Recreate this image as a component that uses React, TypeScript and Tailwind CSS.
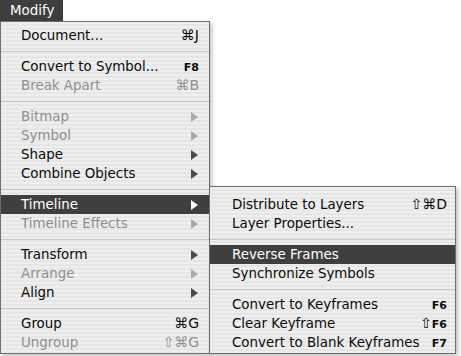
import React from "react";

type Item =
  | { sep: true }
  | {
      sep?: false;
      label: string;
      shortcut?: React.ReactNode;
      arrow?: boolean;
      disabled?: boolean;
      active?: boolean;
    };

const stripes =
  "bg-[repeating-linear-gradient(to_bottom,#eeeeee_0px,#eeeeee_2px,#e6e6e6_2px,#e6e6e6_4px)]";

function Arrow({ color }: { color: string }) {
  return (
    <svg width="7" height="10" viewBox="0 0 7 10" className="shrink-0">
      <polygon points="0,0 7,5 0,10" fill={color} />
    </svg>
  );
}

const Fkey = ({ children }: { children: React.ReactNode }) => (
  <span className="text-[11px] font-bold">{children}</span>
);

const Cmd = ({ children }: { children: React.ReactNode }) => (
  <span className="text-[14px]">{children}</span>
);

const mainItems: Item[] = [
  { label: "Document...", shortcut: <Cmd>⌘J</Cmd> },
  { sep: true },
  { label: "Convert to Symbol...", shortcut: <Fkey>F8</Fkey> },
  { label: "Break Apart", shortcut: <Cmd>⌘B</Cmd>, disabled: true },
  { sep: true },
  { label: "Bitmap", arrow: true, disabled: true },
  { label: "Symbol", arrow: true, disabled: true },
  { label: "Shape", arrow: true },
  { label: "Combine Objects", arrow: true },
  { sep: true },
  { label: "Timeline", arrow: true, active: true },
  { label: "Timeline Effects", arrow: true, disabled: true },
  { sep: true },
  { label: "Transform", arrow: true },
  { label: "Arrange", arrow: true, disabled: true },
  { label: "Align", arrow: true },
  { sep: true },
  { label: "Group", shortcut: <Cmd>⌘G</Cmd> },
  { label: "Ungroup", shortcut: <Cmd>⇧⌘G</Cmd>, disabled: true },
];

const subItems: Item[] = [
  { label: "Distribute to Layers", shortcut: <Cmd>⇧⌘D</Cmd> },
  { label: "Layer Properties..." },
  { sep: true },
  { label: "Reverse Frames", active: true },
  { label: "Synchronize Symbols" },
  { sep: true },
  { label: "Convert to Keyframes", shortcut: <Fkey>F6</Fkey> },
  { label: "Clear Keyframe", shortcut: <span><Cmd>⇧</Cmd><Fkey>F6</Fkey></span> },
  { label: "Convert to Blank Keyframes", shortcut: <Fkey>F7</Fkey> },
];

function Separator() {
  return (
    <div className="h-[12px] flex items-center">
      <div className="w-full h-px bg-[#c6c6c6]" />
    </div>
  );
}

function Row({
  item,
  pad,
  children,
}: {
  item: Exclude<Item, { sep: true }>;
  pad: string;
  children?: React.ReactNode;
}) {
  const color = item.active
    ? "bg-[#3f3f3f] text-white"
    : item.disabled
    ? "text-[#8e8e8e]"
    : "text-[#0a0a0a]";
  const arrowColor = item.active ? "#ffffff" : item.disabled ? "#a9a9a9" : "#4a4a4a";
  return (
    <div className={`relative h-[19px] flex items-center justify-between ${pad} ${color}`}>
      <span className="leading-[19px] whitespace-nowrap">{item.label}</span>
      {item.shortcut && <span className="leading-[19px] whitespace-nowrap">{item.shortcut}</span>}
      {item.arrow && (
        <span className="mr-[1px]">
          <Arrow color={arrowColor} />
        </span>
      )}
      {children}
    </div>
  );
}

function SubMenu() {
  return (
    <div
      className={`absolute left-full -top-[9px] w-[247px] border border-[#6e6e6e] pt-[8px] pb-px ${stripes} shadow-[2px_2px_4px_rgba(0,0,0,0.25)] z-10`}
    >
      {subItems.map((it, i) =>
        it.sep ? (
          <Separator key={i} />
        ) : (
          <Row key={i} item={it} pad="pl-[22px] pr-[8px]" />
        )
      )}
    </div>
  );
}

export default function App() {
  return (
    <div
      className="w-[461px] h-[356px] bg-white overflow-hidden text-[13.4px]"
      style={{ fontFamily: '"DejaVu Sans", sans-serif' }}
    >
      <div className="w-[63px] h-[21px] bg-[#3e3e3e] text-white pl-[10px] leading-[21px]">Modify</div>
      <div
        className={`relative w-[210px] h-[333px] border border-[#6e6e6e] pt-[4px] ${stripes} shadow-[2px_2px_4px_rgba(0,0,0,0.25)]`}
      >
        {mainItems.map((it, i) =>
          it.sep ? (
            <Separator key={i} />
          ) : (
            <Row key={i} item={it} pad="pl-[20px] pr-[10px]">
              {it.active && <SubMenu />}
            </Row>
          )
        )}
      </div>
    </div>
  );
}
